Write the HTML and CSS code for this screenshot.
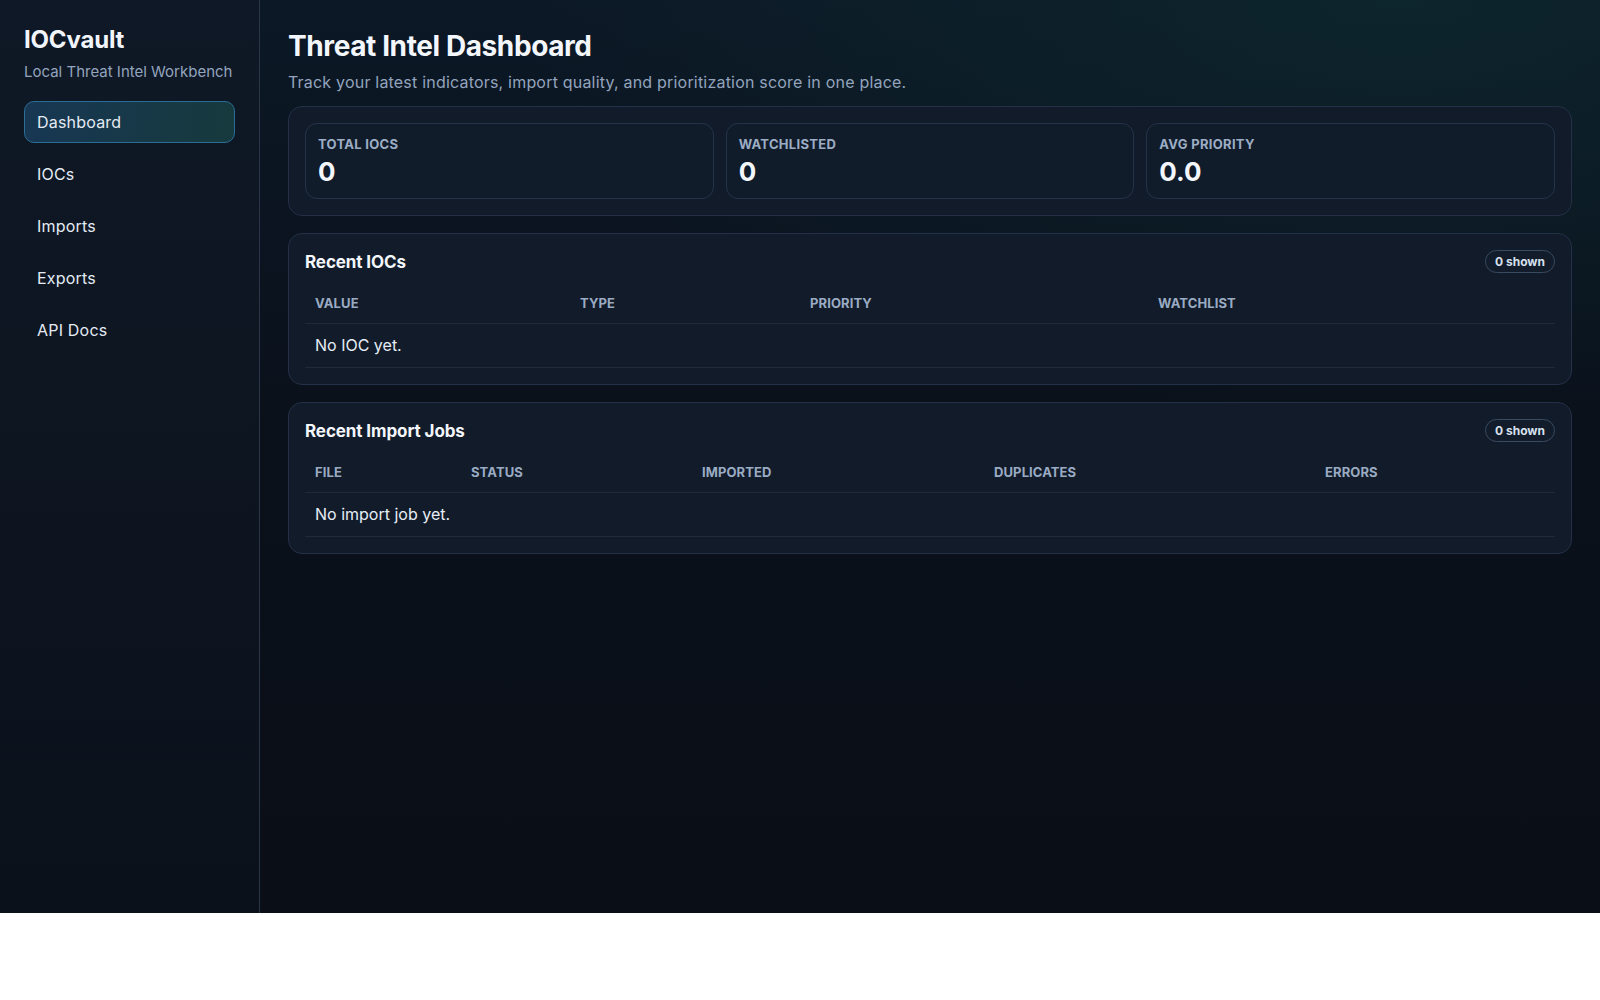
FILE: index.html
```html
<!DOCTYPE html>
<html lang="en">
<head>
<meta charset="utf-8">
<title>IOCvault</title>
<link rel="stylesheet" href="styles.css">
</head>
<body>
<div class="app">
  <aside class="sidebar">
    <div class="brand">IOCvault</div>
    <div class="brand-sub">Local Threat Intel Workbench</div>
    <nav class="nav">
      <a class="nav-item active">Dashboard</a>
      <a class="nav-item">IOCs</a>
      <a class="nav-item">Imports</a>
      <a class="nav-item">Exports</a>
      <a class="nav-item">API Docs</a>
    </nav>
  </aside>
  <main class="main">
    <h1 class="page-title">Threat Intel Dashboard</h1>
    <p class="page-sub">Track your latest indicators, import quality, and prioritization score in one place.</p>

    <section class="panel stats">
      <div class="stat-card">
        <div class="stat-label">Total IOCs</div>
        <div class="stat-value">0</div>
      </div>
      <div class="stat-card">
        <div class="stat-label">Watchlisted</div>
        <div class="stat-value">0</div>
      </div>
      <div class="stat-card">
        <div class="stat-label">Avg Priority</div>
        <div class="stat-value">0.0</div>
      </div>
    </section>

    <section class="panel">
      <div class="panel-head">
        <h2 class="panel-title">Recent IOCs</h2>
        <span class="badge">0 shown</span>
      </div>
      <table class="table">
        <colgroup>
          <col class="c-value"><col class="c-type"><col class="c-priority"><col>
        </colgroup>
        <thead>
          <tr><th>Value</th><th>Type</th><th>Priority</th><th>Watchlist</th></tr>
        </thead>
        <tbody>
          <tr><td colspan="4">No IOC yet.</td></tr>
        </tbody>
      </table>
    </section>

    <section class="panel">
      <div class="panel-head">
        <h2 class="panel-title">Recent Import Jobs</h2>
        <span class="badge">0 shown</span>
      </div>
      <table class="table">
        <colgroup>
          <col class="c-file"><col class="c-status"><col class="c-imported"><col class="c-dup"><col>
        </colgroup>
        <thead>
          <tr><th>File</th><th>Status</th><th>Imported</th><th>Duplicates</th><th>Errors</th></tr>
        </thead>
        <tbody>
          <tr><td colspan="5">No import job yet.</td></tr>
        </tbody>
      </table>
    </section>
  </main>
</div>
</body>
</html>
```

FILE: styles.css
```css
* { box-sizing: border-box; }

html, body {
  margin: 0;
  padding: 0;
  background: #ffffff;
}

body {
  font-family: "Inter", "Noto Sans", "DejaVu Sans", sans-serif;
  color: #e6edf6;
}

.app {
  display: flex;
  height: 913px;
}

.sidebar {
  width: 260px;
  flex: 0 0 260px;
  border-right: 1px solid #2a3547;
  background: linear-gradient(180deg, #0f1826 0%, #0d1520 50%, #0b111b 100%);
  padding: 25px 24px;
}

.brand {
  font-size: 24px;
  line-height: 30px;
  font-weight: 700;
  color: #f1f5fb;
  letter-spacing: -0.2px;
}

.brand-sub {
  margin-top: 7px;
  font-size: 15px;
  line-height: 20px;
  color: #93a4bd;
  white-space: nowrap;
}

.nav {
  margin-top: 19px;
  display: flex;
  flex-direction: column;
  gap: 10px;
}

.nav-item {
  display: flex;
  align-items: center;
  height: 42px;
  padding: 0 12px;
  border: 1px solid transparent;
  border-radius: 10px;
  font-size: 16px;
  color: #e4ebf4;
  letter-spacing: 0.2px;
}

.nav-item.active {
  border-color: #2a6e96;
  background: linear-gradient(100deg, #173753 0%, #163a3d 100%);
}

.main {
  flex: 1;
  padding: 28px 28px;
  background:
    radial-gradient(ellipse 900px 420px at 85% 0%, rgba(14, 52, 52, 0.45), rgba(14, 52, 52, 0) 100%),
    linear-gradient(180deg, #0c1826 0%, #0a111b 45%, #0a0e17 100%);
}

.page-title {
  margin: 0;
  font-size: 28px;
  line-height: 36px;
  font-weight: 700;
  color: #f3f6fb;
  letter-spacing: -0.4px;
}

.page-sub {
  margin: 6px 0 12px;
  font-size: 16px;
  line-height: 24px;
  color: #93a4bd;
  letter-spacing: 0.2px;
}

.panel {
  background: #111b29;
  border: 1px solid #233047;
  border-radius: 14px;
  padding: 16px;
  margin-bottom: 17px;
}

.stats {
  display: grid;
  grid-template-columns: repeat(3, 1fr);
  gap: 12px;
}

.stat-card {
  background: #111c2b;
  border: 1px solid #25334a;
  border-radius: 12px;
  padding: 12px 12px;
  height: 76px;
}

.stat-label {
  font-size: 13px;
  line-height: 16px;
  font-weight: 700;
  text-transform: uppercase;
  color: #9cadc5;
  letter-spacing: 0.3px;
}

.stat-value {
  margin-top: 6px;
  font-size: 26px;
  line-height: 28px;
  font-weight: 700;
  color: #f3f6fb;
}

.panel-head {
  display: flex;
  align-items: center;
  justify-content: space-between;
  height: 23px;
  margin-bottom: 10px;
}

.panel-title {
  margin: 0;
  font-size: 17px;
  line-height: 22px;
  font-weight: 700;
  color: #f3f6fb;
  letter-spacing: -0.1px;
}

.badge {
  display: inline-flex;
  align-items: center;
  height: 23px;
  padding: 0 9px;
  border: 1px solid #3a4a5f;
  border-radius: 999px;
  font-size: 12px;
  font-weight: 700;
  color: #d7e1ed;
  background: #121c2a;
}

.table {
  width: 100%;
  border-collapse: collapse;
  table-layout: fixed;
}

.table th {
  text-align: left;
  padding: 10px 10px;
  font-size: 13px;
  line-height: 20px;
  font-weight: 700;
  text-transform: uppercase;
  color: #9aabc3;
  letter-spacing: 0.1px;
  border-bottom: 1px solid #1f2b3c;
}

.table td {
  padding: 10px 10px;
  font-size: 16px;
  line-height: 23px;
  color: #e6edf6;
  border-bottom: 1px solid #1f2b3c;
}

.c-value { width: 265px; }
.c-type { width: 230px; }
.c-priority { width: 348px; }

.c-file { width: 156px; }
.c-status { width: 231px; }
.c-imported { width: 292px; }
.c-dup { width: 331px; }
```
